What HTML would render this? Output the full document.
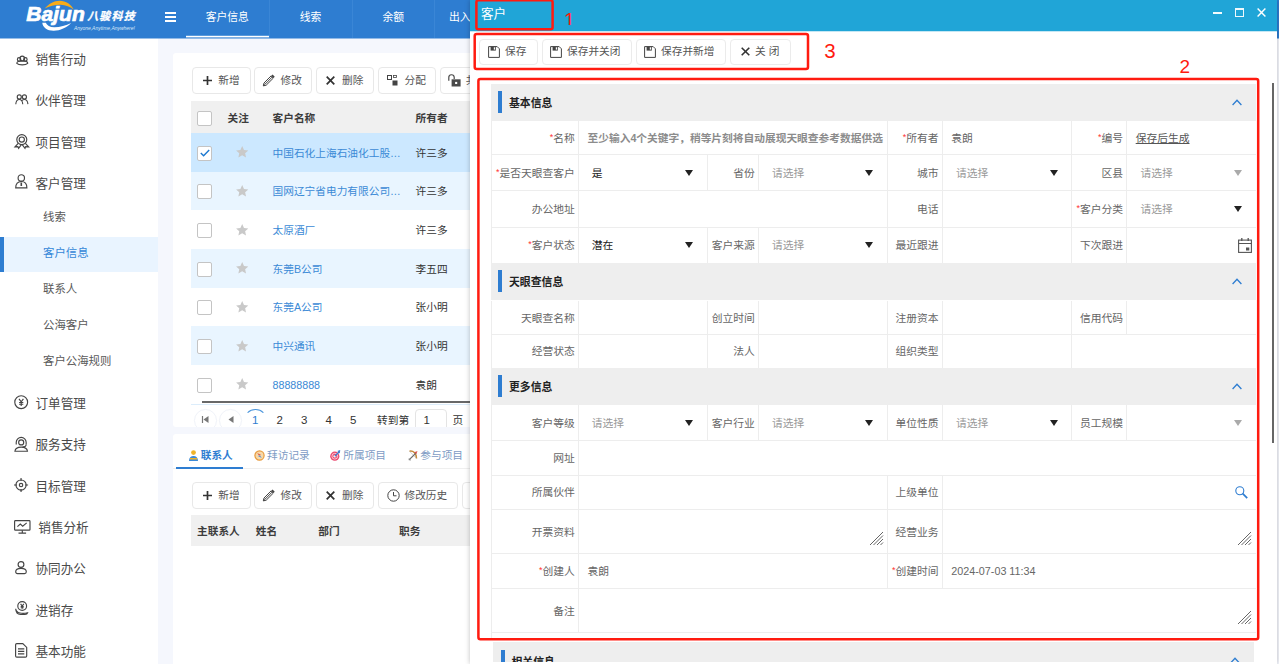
<!DOCTYPE html>
<html lang="zh-CN">
<head>
<meta charset="utf-8">
<title>客户</title>
<style>
*{box-sizing:border-box;margin:0;padding:0}
html,body{width:1279px;height:664px;overflow:hidden}
body{position:relative;background:#f5f7fd;font-family:"Liberation Sans","Noto Sans CJK SC",sans-serif;font-size:10.7px;color:#333;line-height:1}
.abs{position:absolute}
svg{display:block;overflow:visible}
/* header */
#hdr{position:absolute;left:0;top:0;width:1279px;height:38px;background:#2e7dd1}
.tab{position:absolute;top:0;height:38px;line-height:34.6px;text-align:center;color:#fff;font-size:10.8px;border-right:1px solid #3a86d6;white-space:nowrap;overflow:hidden}
/* sidebar */
#side{position:absolute;left:0;top:38px;width:158px;height:626px;background:#fff}
.m1{position:absolute;left:35.5px;font-size:12.6px;color:#4a4a4a;height:16px;line-height:16px;white-space:nowrap}
.m2{position:absolute;left:43px;font-size:11.4px;color:#595959;height:16px;line-height:16px;white-space:nowrap}
.ico{position:absolute;left:14.7px}.ico svg{stroke-width:1.15px}
/* cards */
.card{position:absolute;background:#fff;border-radius:3px}
.btn{position:absolute;height:27px;border:1px solid #e8e8e8;border-radius:4px;background:#fff;color:#555;font-size:10.7px;line-height:25px;white-space:nowrap}
.btn span{position:absolute;top:0}
.th{position:absolute;font-weight:bold;color:#3c3c3c;font-size:10.7px;white-space:nowrap;line-height:14px}
.row{position:absolute;left:191px;width:290px}
.cb{position:absolute;left:197px;width:15px;height:15px;border:1px solid #c4c4c4;border-radius:2px;background:#fff}
.nm{position:absolute;left:272.5px;color:#3b8ad6;font-size:10.7px;white-space:nowrap;line-height:14px}
.ow{position:absolute;left:415.5px;color:#333;font-size:10.7px;white-space:nowrap;line-height:14px}
.star{position:absolute;left:235.6px;width:12.4px;height:11.5px}
.pg{position:absolute;font-size:11.5px;color:#333;line-height:14px;white-space:nowrap}
.circ{position:absolute;width:22.7px;height:22.7px;border:1px solid #f0f3f9;border-radius:50%}
.t2{position:absolute;font-size:10.7px;line-height:14px;white-space:nowrap;color:#7d9bc4}
/* dialog */
#dlg{position:absolute;left:469.6px;top:0;width:807.4px;height:664px;background:#fff;box-shadow:0 0 5px rgba(0,0,0,.25)}
#dh{position:absolute;left:0;top:0;width:807.4px;height:31px;background:#20a5d7}
.sec{position:absolute;left:491px;width:764.7px;background:#eeeeee}
.sec i{position:absolute;left:7px;width:4px;background:#2e7dd1}
.sec b{position:absolute;left:18px;font-size:10.85px;color:#222;line-height:14px;white-space:nowrap}
.hl{position:absolute;left:491px;width:764.7px;height:1px;background:#ededed}
.vl{position:absolute;width:1px;background:#ededed}
.lb{position:absolute;text-align:right;color:#666;font-size:10.78px;line-height:14px;white-space:nowrap}
.lb em{color:#f33;font-style:normal;font-size:9px;position:relative;top:-2px}
.vv{position:absolute;color:#999;font-size:10.78px;line-height:14px;white-space:nowrap}
.tri{position:absolute;width:0;height:0;border-left:4px solid transparent;border-right:4px solid transparent;border-top:6px solid #222}
.tri.g{border-top-color:#aaa}
.red{position:absolute;border:2px solid #ff1a0f;border-radius:2px}
.rn{position:absolute;color:#ff1a0f;font-size:19px;line-height:20px;font-family:"Liberation Sans","Noto Sans CJK SC",sans-serif}
.dbtn{position:absolute;top:39px;height:25.5px;border:1px solid #ebebeb;border-radius:4px;background:#fff;color:#555;font-size:10.7px;white-space:nowrap}
.dbtn span{position:absolute;top:4.3px;line-height:14px}
.grip{position:absolute;width:13px;height:13px}
</style>
</head>
<body>
<div id="hdr">
<!-- logo -->
<svg class="abs" style="left:26px;top:0" width="115" height="36" viewBox="0 0 115 36">
<path d="M18.700 8.600 C22.500 3.800 28 0.700 33.500 0.700 C40 0.700 45.500 4.500 47.900 9.800 C44.500 6.800 39.500 4.900 34.500 4.800 C29 4.700 23.500 6.200 18.700 8.600Z" fill="#f7ab19"/>
<path d="M16.300 22.700 L19.800 22.700 C21 25.500 24 27.400 28.500 27.300 C34 27.200 40 25.500 45.200 23 C40.500 27.800 34 30.800 27.500 30.700 C21 30.600 16.800 27.500 16.300 22.700Z" fill="#fff"/>
<text x="0.300" y="20.700" font-family="Liberation Sans, sans-serif" font-weight="bold" font-style="italic" font-size="21" fill="#fff" stroke="#fff" stroke-width=".7" textLength="58.500" lengthAdjust="spacingAndGlyphs">Bajun</text>
<text x="61.200" y="20.200" font-family="Liberation Sans, Noto Sans CJK SC, sans-serif" font-weight="bold" font-style="italic" font-size="11" fill="#fff" stroke="#fff" stroke-width=".3" textLength="47.500" lengthAdjust="spacing">八骏科技</text>
<text x="47.900" y="29.700" font-family="Liberation Sans, sans-serif" font-style="italic" font-size="5.300" fill="#d9e8f8" textLength="61" lengthAdjust="spacingAndGlyphs">Anyone,Anytime,Anywhere!</text>
</svg>
<!-- hamburger -->
<div class="abs" style="left:165px;top:12px;width:11px;height:2px;background:#fff"></div>
<div class="abs" style="left:165px;top:16px;width:11px;height:2px;background:#fff"></div>
<div class="abs" style="left:165px;top:20px;width:11px;height:2px;background:#fff"></div>
<div class="tab" style="left:186px;width:83.5px">客户信息</div>
<div class="tab" style="left:269.5px;width:83px">线索</div>
<div class="tab" style="left:352.5px;width:82.5px">余额</div>
<div class="tab" style="left:435px;width:83px;text-align:left;padding-left:14px;border-right:0">出入库</div>
<div class="abs" style="left:186px;top:36px;width:83px;height:1px;background:#fff"></div><div class="abs" style="left:186px;top:37px;width:83px;height:1px;background:#7fb0e3"></div><div class="abs" style="left:186px;top:35px;width:83px;height:1px;background:#5a9adb"></div>
</div>

<div id="side">
<div class="abs" style="left:0;top:199px;width:158px;height:35px;background:#e9f4ff"></div>
<div class="abs" style="left:0;top:199px;width:4px;height:35px;background:#2e7dd1"></div>
<svg class="abs" style="left:15.5px;top:16.5px" width="12.5" height="10.5" viewBox="0 0 13 11" fill="none" stroke="#444" stroke-width="1.20"><circle cx="6.5" cy="3.6" r="2.4"/><circle cx="3.2" cy="4.6" r="1.8"/><circle cx="9.8" cy="4.6" r="1.8"/><path d="M.8 8.800c0-1.400 1-2.300 2.500-2.300h6.400c1.500 0 2.500.9 2.500 2.300-1 1-3 1.600-5.700 1.600S1.800 9.800.8 8.800z"/></svg><div class="m1" style="top:13.8px;left:35.5px">销售行动</div>
<svg class="abs" style="left:15px;top:56.3px" width="13.5" height="10.7" viewBox="0 0 13.5 11" fill="none" stroke="#444" stroke-width="1.15"><circle cx="4.200" cy="3" r="2.100"/><circle cx="9.500" cy="3" r="2.100"/><path d="M.6 10.500c.3-3.200 1.600-4.800 3.600-4.800s3.300 1.600 3.600 4.800M6.600 7.300c.6-1.100 1.600-1.700 2.900-1.700 2 0 3.300 1.600 3.600 4.800"/></svg><div class="m1" style="top:55.1px;left:35.5px">伙伴管理</div>
<svg class="abs" style="left:13.6px;top:96.4px" width="15.6" height="14.6" viewBox="0 0 15.600 14.600" fill="none" stroke="#444" stroke-width="1.15"><circle cx="7.800" cy="5.600" r="5"/><circle cx="7.800" cy="5.600" r="2.600"/><path d="M4.200 9.300L1 12.800l2.900-.2.700 1.700 2.600-3.500M11.400 9.300l3.200 3.500-2.900-.2-.7 1.700-2.600-3.500"/></svg><div class="m1" style="top:96.5px;left:35.5px">项目管理</div>
<svg class="abs" style="left:15.3px;top:136.2px" width="12.6" height="14.6" viewBox="0 0 12.600 14.600" fill="none" stroke="#444" stroke-width="1.15"><circle cx="6.300" cy="3.900" r="3.200"/><path d="M.7 13.900c0-4 2.100-6.400 5.600-6.400s5.600 2.400 5.600 6.400z"/><path d="M6.300 8.500v3.500" stroke-width="1.600"/></svg><div class="m1" style="top:137.8px;left:35.5px">客户管理</div>
<svg class="abs" style="left:13.9px;top:357.3px" width="14.4" height="14.4" viewBox="0 0 13 13" fill="none" stroke="#444" stroke-width="1.04"><circle cx="6.500" cy="6.500" r="5.800"/><path d="M4.500 3.500l2 2.700 2-2.700M6.500 6.200v3.700M4.600 6.800h3.800M4.600 8.400h3.800"/></svg><div class="m1" style="top:357.8px;left:35.5px">订单管理</div>
<svg class="abs" style="left:13.9px;top:398.8px" width="14.4" height="14.9" viewBox="0 0 13 13.500" fill="none" stroke="#444" stroke-width="1.04"><circle cx="6.500" cy="4.900" r="2.300"/><path d="M2 6.700V4.800a4.500 4.500 0 0 1 9 0v1.900M.8 12.900c.3-2.400 2.300-3.700 5.700-3.700s5.400 1.300 5.700 3.700z"/><path d="M11 6.700c0 1.500-1.600 2.300-3.200 2.300"/></svg><div class="m1" style="top:399.3px;left:35.5px">服务支持</div>
<svg class="abs" style="left:14.3px;top:440.2px" width="14.1" height="14.1" viewBox="0 0 13 13" fill="none" stroke="#444" stroke-width="1.06"><circle cx="6.500" cy="6.500" r="4.700"/><circle cx="6.500" cy="6.500" r="1.600"/><path d="M6.500 0v2.800M6.500 10.200V13M0 6.500h2.800M10.200 6.500H13"/></svg><div class="m1" style="top:440.8px;left:35.5px">目标管理</div>
<svg class="abs" style="left:14.2px;top:481.7px" width="16.6" height="13.8" viewBox="0 0 16.600 13.800" fill="none" stroke="#444" stroke-width="1.15"><rect x=".6" y=".6" width="15.400" height="9.600" rx=".8"/><path d="M3.400 6.600l2.900-2.500 2.400 2.100 4-3.300M8.300 10.200v2.700M4.500 13.200h7.600"/></svg><div class="m1" style="top:481.8px;left:38.3px">销售分析</div>
<svg class="abs" style="left:15.4px;top:522.6px" width="12" height="13.2" viewBox="0 0 12 13.200" fill="none" stroke="#444" stroke-width="1.15"><circle cx="6" cy="3.500" r="2.900"/><path d="M.7 10.800c0-2.100 2.100-3.400 5.300-3.400s5.300 1.300 5.300 3.400c0 1.200-.7 1.800-1.800 1.800H2.500c-1.100 0-1.800-.6-1.800-1.800z"/></svg><div class="m1" style="top:523.3px;left:35.5px">协同办公</div>
<svg class="abs" style="left:15px;top:563.4px" width="13.2" height="14" viewBox="0 0 13.200 14" fill="none" stroke="#444" stroke-width="1.15"><circle cx="7.200" cy="5" r="4.400"/><path d="M5.600 2.900l1.600 2.100 1.600-2.100M7.200 5v2.700M5.700 5.500h3M5.700 6.800h3"/><path d="M.7 7.800c.2 2.200 1.800 3.600 4.200 4.200 2.600.6 5.600.3 7.700-.2-.3 1.200-1.300 1.700-2.600 1.700H5.500C2.800 13.500.9 11.400.7 7.800z"/></svg><div class="m1" style="top:564.8px;left:35.5px">进销存</div>
<svg class="abs" style="left:15.4px;top:604.7px" width="12.3" height="14.8" viewBox="0 0 12.300 14.800" fill="none" stroke="#444" stroke-width="1.15"><path d="M1.800.600h6l3.900 3.800v8.600c0 .7-.5 1.200-1.200 1.200H1.800c-.7 0-1.200-.5-1.200-1.200V1.800c0-.7.500-1.200 1.200-1.200z"/><path d="M3 5.800h6.300M3 8.300h6.300M3 10.800h6.300" stroke-width="1.300"/></svg><div class="m1" style="top:605.8px;left:35.5px">基本功能</div>
<div class="m2" style="top:170.9px">线索</div>
<div class="m2" style="top:206.9px;color:#3587d8">客户信息</div>
<div class="m2" style="top:242.9px">联系人</div>
<div class="m2" style="top:278.9px">公海客户</div>
<div class="m2" style="top:314.9px">客户公海规则</div>
</div>
<div class="card" style="left:173px;top:53px;width:320px;height:373.5px"></div>
<div class="card" style="left:173px;top:434px;width:320px;height:240px"></div>
<div class="abs" style="left:0;top:38px;width:1279px;height:1px;background:#92bae7"></div>
<div class="abs" style="left:0;top:38px;width:158px;height:1px;background:#97bee8"></div>
<div class="btn" style="left:192.4px;top:67px;width:58.2px"><svg class="abs" style="left:9.5px;top:7.8px" width="9" height="9" viewBox="0 0 9 9"><path d="M4.5 0v9M0 4.5h9" stroke="#333" stroke-width="1.7"/></svg><span style="left:24.8px">新增</span></div>
<div class="btn" style="left:254.3px;top:67px;width:58.2px"><svg class="abs" style="left:7px;top:6px" width="13" height="13" viewBox="0 0 13 13"><path d="M1.300 11.900l.7-2.900 7.100-7.100 2.200 2.200-7.100 7.100z" fill="#fff" stroke="#444" stroke-width="1"/><path d="M2.600 10.600l7.500-7.500" stroke="#444" stroke-width="1"/><path d="M9.900 1.100l2.200 2.200" stroke="#444" stroke-width="1.900"/><path d="M1.300 11.900l.5-1.900 1.400 1.400z" fill="#444"/></svg><span style="left:25.2px">修改</span></div>
<div class="btn" style="left:316.3px;top:67px;width:58.2px"><svg class="abs" style="left:9px;top:7.8px" width="9" height="9" viewBox="0 0 9 9"><path d="M.7.7l7.600 7.600M8.300.7L.7 8.300" stroke="#333" stroke-width="1.700"/></svg><span style="left:24.8px">删除</span></div>
<div class="btn" style="left:192.4px;top:482px;width:58.2px"><svg class="abs" style="left:9.5px;top:7.8px" width="9" height="9" viewBox="0 0 9 9"><path d="M4.5 0v9M0 4.5h9" stroke="#333" stroke-width="1.7"/></svg><span style="left:24.8px">新增</span></div>
<div class="btn" style="left:254.3px;top:482px;width:58.2px"><svg class="abs" style="left:7px;top:6px" width="13" height="13" viewBox="0 0 13 13"><path d="M1.300 11.900l.7-2.900 7.100-7.100 2.200 2.200-7.100 7.100z" fill="#fff" stroke="#444" stroke-width="1"/><path d="M2.600 10.600l7.500-7.500" stroke="#444" stroke-width="1"/><path d="M9.900 1.100l2.200 2.200" stroke="#444" stroke-width="1.900"/><path d="M1.300 11.900l.5-1.900 1.400 1.400z" fill="#444"/></svg><span style="left:25.2px">修改</span></div>
<div class="btn" style="left:316.3px;top:482px;width:58.2px"><svg class="abs" style="left:9px;top:7.8px" width="9" height="9" viewBox="0 0 9 9"><path d="M.7.7l7.600 7.600M8.300.7L.7 8.300" stroke="#333" stroke-width="1.700"/></svg><span style="left:24.8px">删除</span></div>
<div class="btn" style="left:378.3px;top:67px;width:58.2px"><svg class="abs" style="left:7.5px;top:6.500px" width="11" height="11" viewBox="0 0 11 11"><rect x=".5" y=".5" width="4" height="4" fill="none" stroke="#444"/><rect x="6.5" y=".5" width="3" height="2" fill="none" stroke="#444" stroke-width=".8"/><rect x="5.500" y="5.500" width="5" height="5" fill="#444"/></svg><span style="left:25.2px">分配</span></div>
<div class="btn" style="left:440.2px;top:67px;width:70px"><svg class="abs" style="left:7px;top:6px" width="13" height="13" viewBox="0 0 13 13"><path d="M.8 6.800V3.600a2.700 2.700 0 0 1 5.400-.3V5" fill="none" stroke="#4a4a4a" stroke-width="1.200"/><rect x="3.600" y="5.300" width="9" height="7.200" fill="#4a4a4a"/><rect x="7.100" y="7.900" width="2.100" height="2.100" fill="#fff"/></svg><span style="left:24.5px">共享</span></div>
<div class="btn" style="left:378.3px;top:482px;width:80.2px"><svg class="abs" style="left:8px;top:6.200px" width="13" height="13" viewBox="0 0 13 13"><circle cx="6.500" cy="6.500" r="5.700" fill="none" stroke="#444" stroke-width="1"/><path d="M6.500 3v3.800h3" fill="none" stroke="#444" stroke-width="1"/></svg><span style="left:25.2px">修改历史</span></div>
<div class="btn" style="left:462.3px;top:482px;width:60px"><span style="left:0px"></span></div>
<div class="abs" style="left:191px;top:101px;width:300px;height:32px;background:#f0f0f0"></div>
<div class="cb" style="top:111px"></div>
<div class="th" style="left:227.5px;top:110.5px">关注</div>
<div class="th" style="left:272.5px;top:110.5px">客户名称</div>
<div class="th" style="left:415.5px;top:110.5px">所有者</div>
<div class="row" style="top:133.00px;height:38.67px;background:#cce8ff"></div>
<div class="cb" style="top:145.5px"><svg class="abs" style="left:1.5px;top:2.5px" width="10" height="8" viewBox="0 0 10 8"><path d="M.8 4l2.800 2.800L9.200.9" fill="none" stroke="#1b78d0" stroke-width="1.400"/></svg></div>
<svg class="star" style="top:146.1px" viewBox="0 0 13 12"><path d="M6.500 0l1.900 4.100 4.500.5-3.300 3 .9 4.400-4-2.300-4 2.300.9-4.400L.1 4.600l4.500-.5z" fill="#c9c9c9"/></svg>
<div class="nm" style="top:145.5px">中国石化上海石油化工股…</div>
<div class="ow" style="top:145.5px">许三多</div>
<div class="row" style="top:171.67px;height:38.67px;background:#e9f5ff"></div>
<div class="cb" style="top:184.2px"></div>
<svg class="star" style="top:184.8px" viewBox="0 0 13 12"><path d="M6.500 0l1.900 4.100 4.500.5-3.300 3 .9 4.400-4-2.300-4 2.300.9-4.400L.1 4.600l4.500-.5z" fill="#c9c9c9"/></svg>
<div class="nm" style="top:184.2px">国网辽宁省电力有限公司…</div>
<div class="ow" style="top:184.2px">许三多</div>
<div class="row" style="top:210.34px;height:38.67px;background:#fff"></div>
<div class="cb" style="top:222.9px"></div>
<svg class="star" style="top:223.5px" viewBox="0 0 13 12"><path d="M6.500 0l1.900 4.100 4.500.5-3.300 3 .9 4.400-4-2.300-4 2.300.9-4.400L.1 4.600l4.500-.5z" fill="#c9c9c9"/></svg>
<div class="nm" style="top:222.9px">太原酒厂</div>
<div class="ow" style="top:222.9px">许三多</div>
<div class="row" style="top:249.01px;height:38.67px;background:#e9f5ff"></div>
<div class="cb" style="top:261.5px"></div>
<svg class="star" style="top:262.1px" viewBox="0 0 13 12"><path d="M6.500 0l1.900 4.100 4.500.5-3.300 3 .9 4.400-4-2.300-4 2.300.9-4.400L.1 4.600l4.500-.5z" fill="#c9c9c9"/></svg>
<div class="nm" style="top:261.5px">东莞B公司</div>
<div class="ow" style="top:261.5px">李五四</div>
<div class="row" style="top:287.68px;height:38.67px;background:#fff"></div>
<div class="cb" style="top:300.2px"></div>
<svg class="star" style="top:300.8px" viewBox="0 0 13 12"><path d="M6.500 0l1.900 4.100 4.500.5-3.300 3 .9 4.400-4-2.300-4 2.300.9-4.400L.1 4.600l4.500-.5z" fill="#c9c9c9"/></svg>
<div class="nm" style="top:300.2px">东莞A公司</div>
<div class="ow" style="top:300.2px">张小明</div>
<div class="row" style="top:326.35px;height:38.67px;background:#e9f5ff"></div>
<div class="cb" style="top:338.9px"></div>
<svg class="star" style="top:339.5px" viewBox="0 0 13 12"><path d="M6.500 0l1.900 4.100 4.500.5-3.300 3 .9 4.400-4-2.300-4 2.300.9-4.400L.1 4.600l4.500-.5z" fill="#c9c9c9"/></svg>
<div class="nm" style="top:338.9px">中兴通讯</div>
<div class="ow" style="top:338.9px">张小明</div>
<div class="row" style="top:365.02px;height:38.67px;background:#fff"></div>
<div class="cb" style="top:377.6px"></div>
<svg class="star" style="top:378.2px" viewBox="0 0 13 12"><path d="M6.500 0l1.900 4.100 4.500.5-3.300 3 .9 4.400-4-2.300-4 2.300.9-4.400L.1 4.600l4.500-.5z" fill="#c9c9c9"/></svg>
<div class="nm" style="top:377.6px">88888888</div>
<div class="ow" style="top:377.6px">袁朗</div>
<div class="abs" style="left:202px;top:400.7px;width:280px;height:2px;background:#686868"></div>
<div class="abs" style="left:191px;top:404px;width:290px;height:1px;background:#dcedfb"></div>
<div class="abs" style="left:173px;top:405px;width:300px;height:21.5px;overflow:hidden">
<div class="circ" style="left:21.3px;top:4px"></div><div class="circ" style="left:46.3px;top:4px"></div>
<div class="circ" style="left:71.3px;top:4px;border-width:1.3px;border-color:transparent;border-top-color:#4a95dc"></div>
<svg class="abs" style="left:29.3px;top:10.9px" width="7" height="7" viewBox="0 0 7 7"><path d="M.5 0v7" stroke="#777" stroke-width="1.200"/><path d="M6.500 0v7L1.500 3.500z" fill="#777"/></svg>
<svg class="abs" style="left:55px;top:10.9px" width="6" height="7" viewBox="0 0 6 7"><path d="M5.500 0v7L.5 3.500z" fill="#777"/></svg>
<div class="pg" style="left:79.0px;top:7.8px;color:#2e7dd1">1</div>
<div class="pg" style="left:103.5px;top:7.8px;color:#333">2</div>
<div class="pg" style="left:128.0px;top:7.8px;color:#333">3</div>
<div class="pg" style="left:152.5px;top:7.8px;color:#333">4</div>
<div class="pg" style="left:177.0px;top:7.8px;color:#333">5</div>
<div class="pg" style="left:204px;top:8.2px;font-size:10.7px">转到第</div>
<div class="abs" style="left:241.5px;top:4px;width:32.5px;height:24px;border:1px solid #e4e4e4;border-radius:4px"></div>
<div class="pg" style="left:250.5px;top:7.8px">1</div>
<div class="pg" style="left:279.5px;top:8.2px;font-size:10.7px">页</div>
</div>
<div class="abs" style="left:173px;top:468px;width:310px;height:1px;background:#efefef"></div>
<div class="abs" style="left:176px;top:467px;width:67px;height:2px;background:#2e7dd1"></div>
<svg class="abs" style="left:189px;top:449.5px" width="9" height="11" viewBox="0 0 9 11"><circle cx="4.500" cy="2.600" r="2.400" fill="#f0b429"/><path d="M0 11c0-3.500 1.800-5 4.500-5S9 7.500 9 11z" fill="#3c8ad8"/><rect x="1" y="8" width="7" height="1.500" fill="#f0b429"/></svg>
<div class="t2" style="left:200.7px;top:448px;color:#2e7dd1;font-weight:bold">联系人</div>
<svg class="abs" style="left:253.5px;top:450px" width="11" height="11" viewBox="0 0 11 11"><circle cx="5.500" cy="5.500" r="4.600" fill="#f7d9a8" stroke="#e89a3c" stroke-width="1.200"/><path d="M3.200 3l4 2-2.200.6z" fill="#d94b3f"/><path d="M7.800 8l-4-2 2.200-.6z" fill="#5a8fd0"/></svg>
<div class="t2" style="left:267px;top:448px">拜访记录</div>
<svg class="abs" style="left:330px;top:449.500px" width="11" height="11" viewBox="0 0 11 11"><circle cx="4.800" cy="6.200" r="4.600" fill="#ea4a70"/><circle cx="4.800" cy="6.200" r="2.900" fill="none" stroke="#fbd3dc" stroke-width=".9"/><circle cx="4.800" cy="6.200" r="1.300" fill="#fff"/><path d="M4.800 6.200l4.200-4.200" stroke="#3f7fd0" stroke-width="1.300"/><path d="M7.300 1.100l2.900-1 -.3 3.300z" fill="#3f7fd0"/></svg>
<div class="t2" style="left:343.3px;top:448px">所属项目</div>
<svg class="abs" style="left:407.500px;top:450px" width="10" height="11" viewBox="0 0 10 11"><path d="M1.500 1.200c3.500-.8 7 1.800 7 7.300" fill="none" stroke="#c58b3c" stroke-width="1.500"/><path d="M1.500 1.200l7 7.300" stroke="#b9b9b9" stroke-width=".6"/><path d="M.8 10.200L8 3" stroke="#6b6b6b" stroke-width="1.100"/><path d="M6.300 2.300l3.200-1.300-1.200 3.200z" fill="#d9534f"/><path d="M.3 8.600l2.100.2.200 2.100z" fill="#8a8a8a"/></svg>
<div class="t2" style="left:420.3px;top:448px">参与项目</div>
<div class="abs" style="left:191px;top:514.5px;width:300px;height:31px;background:#f0f0f0"></div>
<div class="th" style="left:197px;top:523.8px">主联系人</div>
<div class="th" style="left:255.8px;top:523.8px">姓名</div>
<div class="th" style="left:318.3px;top:523.8px">部门</div>
<div class="th" style="left:399px;top:523.8px">职务</div>
<div id="dlg"><div id="dh"></div><div class="abs" style="left:0;top:31px;width:807.4px;height:1px;background:#c4e7f4"></div></div>
<div class="abs" style="left:481px;top:6.5px;color:#fff;font-size:12.6px;line-height:14px">客户</div>
<div class="abs" style="left:1213px;top:12px;width:9px;height:2px;background:#f4fbfd"></div>
<div class="abs" style="left:1234.5px;top:8px;width:9px;height:9px;border:1px solid #eef8fc;border-top-width:2px"></div>
<svg class="abs" style="left:1256.5px;top:8px" width="9" height="9" viewBox="0 0 9 9"><path d="M.6.600l7.800 7.800M8.400.600L.6 8.400" stroke="#fff" stroke-width="1.450"/></svg>
<div class="dbtn" style="left:479px;width:58.5px"><svg class="abs" style="left:7.8px;top:5.6px" width="12" height="12" viewBox="0 0 12 12"><path d="M.6.600h8.600l2.200 2.200v8.600H.6z" fill="none" stroke="#444" stroke-width="1"/><rect x="2.600" y=".6" width="5.200" height="4" fill="#444"/><rect x="5.800" y="1.300" width="1.200" height="2.300" fill="#fff"/></svg><span style="left:25px">保存</span></div>
<div class="dbtn" style="left:541.5px;width:90.5px"><svg class="abs" style="left:7.8px;top:5.6px" width="12" height="12" viewBox="0 0 12 12"><path d="M.6.600h8.600l2.200 2.200v8.600H.6z" fill="none" stroke="#444" stroke-width="1"/><rect x="2.600" y=".6" width="5.200" height="4" fill="#444"/><rect x="5.800" y="1.300" width="1.200" height="2.300" fill="#fff"/></svg><span style="left:24.5px">保存并关闭</span></div>
<div class="dbtn" style="left:635.5px;width:90px"><svg class="abs" style="left:7.8px;top:5.6px" width="12" height="12" viewBox="0 0 12 12"><path d="M.6.600h8.600l2.200 2.200v8.600H.6z" fill="none" stroke="#444" stroke-width="1"/><rect x="2.600" y=".6" width="5.200" height="4" fill="#444"/><rect x="5.800" y="1.300" width="1.200" height="2.300" fill="#fff"/></svg><span style="left:24.5px">保存并新增</span></div>
<div class="dbtn" style="left:729.5px;width:61px"><svg class="abs" style="left:10.5px;top:7.3px" width="9" height="9" viewBox="0 0 9 9"><path d="M.7.700l7.600 7.600M8.300.700L.7 8.300" stroke="#333" stroke-width="1.600"/></svg><span style="left:24.5px">关 闭</span></div>
<div class="sec" style="top:84px;height:36.5px"><i style="top:7px;height:21.5px"></i><b style="top:11.8px">基本信息</b><svg class="abs" style="right:14px;top:14.9px" width="10" height="6.500" viewBox="0 0 10 6.500"><path d="M.6 6L5 1.200 9.400 6" fill="none" stroke="#2e7dd1" stroke-width="1.300"/></svg></div>
<div class="hl" style="top:154.0px"></div>
<div class="hl" style="top:190.2px"></div>
<div class="hl" style="top:226.5px"></div>
<div class="lb" style="left:491px;width:83.8px;top:130.8px"><em>*</em>名称</div>
<div class="vv" style="left:587.5px;top:130.8px;font-weight:bold;color:#8c8c8c;font-size:10.72px">至少输入4个关键字，稍等片刻将自动展现天眼查参考数据供选</div>
<div class="lb" style="left:887.5px;width:51.0px;top:130.8px"><em>*</em>所有者</div>
<div class="vv" style="left:951.3px;top:130.8px;color:#666">袁朗</div>
<div class="lb" style="left:1071.5px;width:51.5px;top:130.8px"><em>*</em>编号</div>
<div class="vv" style="left:1135.7px;top:130.8px;color:#555;text-decoration:underline">保存后生成</div>
<div class="vl" style="left:490.5px;top:120.5px;height:34.0px"></div>
<div class="vl" style="left:577.8px;top:120.5px;height:34.0px"></div>
<div class="vl" style="left:887.0px;top:120.5px;height:34.0px"></div>
<div class="vl" style="left:941.5px;top:120.5px;height:34.0px"></div>
<div class="vl" style="left:1071.0px;top:120.5px;height:34.0px"></div>
<div class="vl" style="left:1126.0px;top:120.5px;height:34.0px"></div>
<div class="lb" style="left:491px;width:83.8px;top:165.9px"><em>*</em>是否天眼查客户</div>
<div class="vv" style="left:591.7px;top:165.9px;color:#222">是</div>
<div class="tri" style="left:685.4000000000001px;top:169.9px"></div>
<div class="lb" style="left:707.3px;width:47.5px;top:165.9px">省份</div>
<div class="vv" style="left:772px;top:165.9px;">请选择</div>
<div class="tri" style="left:865.2px;top:169.9px"></div>
<div class="lb" style="left:887.5px;width:51.0px;top:165.9px">城市</div>
<div class="vv" style="left:956px;top:165.9px;">请选择</div>
<div class="tri" style="left:1049.7px;top:169.9px"></div>
<div class="lb" style="left:1071.5px;width:51.5px;top:165.9px">区县</div>
<div class="vv" style="left:1140.5px;top:165.9px;">请选择</div>
<div class="tri g" style="left:1234.0px;top:169.9px"></div>
<div class="vl" style="left:490.5px;top:154.5px;height:36.2px"></div>
<div class="vl" style="left:577.8px;top:154.5px;height:36.2px"></div>
<div class="vl" style="left:706.8px;top:154.5px;height:36.2px"></div>
<div class="vl" style="left:757.8px;top:154.5px;height:36.2px"></div>
<div class="vl" style="left:887.0px;top:154.5px;height:36.2px"></div>
<div class="vl" style="left:941.5px;top:154.5px;height:36.2px"></div>
<div class="vl" style="left:1071.0px;top:154.5px;height:36.2px"></div>
<div class="vl" style="left:1126.0px;top:154.5px;height:36.2px"></div>
<div class="lb" style="left:491px;width:83.8px;top:202.2px">办公地址</div>
<div class="lb" style="left:887.5px;width:51.0px;top:202.2px">电话</div>
<div class="lb" style="left:1071.5px;width:51.5px;top:202.2px"><em>*</em>客户分类</div>
<div class="vv" style="left:1140.5px;top:202.2px;">请选择</div>
<div class="tri" style="left:1234.0px;top:206.2px"></div>
<div class="vl" style="left:490.5px;top:190.7px;height:36.3px"></div>
<div class="vl" style="left:577.8px;top:190.7px;height:36.3px"></div>
<div class="vl" style="left:887.0px;top:190.7px;height:36.3px"></div>
<div class="vl" style="left:941.5px;top:190.7px;height:36.3px"></div>
<div class="vl" style="left:1071.0px;top:190.7px;height:36.3px"></div>
<div class="vl" style="left:1126.0px;top:190.7px;height:36.3px"></div>
<div class="lb" style="left:491px;width:83.8px;top:238.4px"><em>*</em>客户状态</div>
<div class="vv" style="left:591.7px;top:238.4px;color:#222">潜在</div>
<div class="tri" style="left:685.4000000000001px;top:242.4px"></div>
<div class="lb" style="left:707.3px;width:47.5px;top:238.4px">客户来源</div>
<div class="vv" style="left:772px;top:238.4px;">请选择</div>
<div class="tri" style="left:865.2px;top:242.4px"></div>
<div class="lb" style="left:887.5px;width:51.0px;top:238.4px">最近跟进</div>
<div class="lb" style="left:1071.5px;width:51.5px;top:238.4px">下次跟进</div>
<div class="vl" style="left:490.5px;top:227px;height:36.2px"></div>
<div class="vl" style="left:577.8px;top:227px;height:36.2px"></div>
<div class="vl" style="left:706.8px;top:227px;height:36.2px"></div>
<div class="vl" style="left:757.8px;top:227px;height:36.2px"></div>
<div class="vl" style="left:887.0px;top:227px;height:36.2px"></div>
<div class="vl" style="left:941.5px;top:227px;height:36.2px"></div>
<div class="vl" style="left:1071.0px;top:227px;height:36.2px"></div>
<div class="vl" style="left:1126.0px;top:227px;height:36.2px"></div>
<svg class="abs" style="left:1238px;top:238.3px" width="14" height="15" viewBox="0 0 14 15"><rect x=".6" y="2.100" width="12.800" height="12.300" fill="none" stroke="#555" stroke-width="1.100"/><path d="M.6 5.500h12.800" stroke="#555" stroke-width="1"/><path d="M3.800 0v3M10.200 0v3" stroke="#555" stroke-width="1.300"/><rect x="8" y="9.500" width="3.300" height="3" fill="#555"/></svg>
<div class="sec" style="top:263.2px;height:37.3px"><i style="top:7px;height:21.5px"></i><b style="top:12.2px">天眼查信息</b><svg class="abs" style="right:14px;top:15.3px" width="10" height="6.500" viewBox="0 0 10 6.500"><path d="M.6 6L5 1.200 9.400 6" fill="none" stroke="#2e7dd1" stroke-width="1.300"/></svg></div>
<div class="hl" style="top:333.8px"></div>
<div class="lb" style="left:491px;width:83.8px;top:310.7px">天眼查名称</div>
<div class="lb" style="left:707.3px;width:47.5px;top:310.7px">创立时间</div>
<div class="lb" style="left:887.5px;width:51.0px;top:310.7px">注册资本</div>
<div class="lb" style="left:1071.5px;width:51.5px;top:310.7px">信用代码</div>
<div class="lb" style="left:491px;width:83.8px;top:344.4px">经营状态</div>
<div class="lb" style="left:707.3px;width:47.5px;top:344.4px">法人</div>
<div class="lb" style="left:887.5px;width:51.0px;top:344.4px">组织类型</div>
<div class="vl" style="left:490.5px;top:300.5px;height:33.8px"></div>
<div class="vl" style="left:577.8px;top:300.5px;height:33.8px"></div>
<div class="vl" style="left:706.8px;top:300.5px;height:33.8px"></div>
<div class="vl" style="left:757.8px;top:300.5px;height:33.8px"></div>
<div class="vl" style="left:887.0px;top:300.5px;height:33.8px"></div>
<div class="vl" style="left:941.5px;top:300.5px;height:33.8px"></div>
<div class="vl" style="left:1071.0px;top:300.5px;height:33.8px"></div>
<div class="vl" style="left:1126.0px;top:300.5px;height:33.8px"></div>
<div class="vl" style="left:490.5px;top:334.3px;height:33.7px"></div>
<div class="vl" style="left:577.8px;top:334.3px;height:33.7px"></div>
<div class="vl" style="left:706.8px;top:334.3px;height:33.7px"></div>
<div class="vl" style="left:757.8px;top:334.3px;height:33.7px"></div>
<div class="vl" style="left:887.0px;top:334.3px;height:33.7px"></div>
<div class="vl" style="left:941.5px;top:334.3px;height:33.7px"></div>
<div class="vl" style="left:1071.0px;top:334.3px;height:33.7px"></div>
<div class="sec" style="top:368px;height:36.7px"><i style="top:7px;height:21.5px"></i><b style="top:12.0px">更多信息</b><svg class="abs" style="right:14px;top:15.1px" width="10" height="6.500" viewBox="0 0 10 6.500"><path d="M.6 6L5 1.200 9.400 6" fill="none" stroke="#2e7dd1" stroke-width="1.300"/></svg></div>
<div class="hl" style="top:440.0px"></div>
<div class="hl" style="top:474.5px"></div>
<div class="hl" style="top:508.8px"></div>
<div class="hl" style="top:553.2px"></div>
<div class="hl" style="top:587.5px"></div>
<div class="hl" style="top:631.9px"></div>
<div class="lb" style="left:491px;width:83.8px;top:415.9px">客户等级</div>
<div class="vv" style="left:591.7px;top:415.9px;">请选择</div>
<div class="tri" style="left:685.4000000000001px;top:419.9px"></div>
<div class="lb" style="left:707.3px;width:47.5px;top:415.9px">客户行业</div>
<div class="vv" style="left:772px;top:415.9px;">请选择</div>
<div class="tri" style="left:865.2px;top:419.9px"></div>
<div class="lb" style="left:887.5px;width:51.0px;top:415.9px">单位性质</div>
<div class="vv" style="left:956px;top:415.9px;">请选择</div>
<div class="tri" style="left:1049.7px;top:419.9px"></div>
<div class="lb" style="left:1071.5px;width:51.5px;top:415.9px">员工规模</div>
<div class="tri g" style="left:1234.0px;top:419.9px"></div>
<div class="vl" style="left:490.5px;top:404.7px;height:35.8px"></div>
<div class="vl" style="left:577.8px;top:404.7px;height:35.8px"></div>
<div class="vl" style="left:706.8px;top:404.7px;height:35.8px"></div>
<div class="vl" style="left:757.8px;top:404.7px;height:35.8px"></div>
<div class="vl" style="left:887.0px;top:404.7px;height:35.8px"></div>
<div class="vl" style="left:941.5px;top:404.7px;height:35.8px"></div>
<div class="vl" style="left:1071.0px;top:404.7px;height:35.8px"></div>
<div class="vl" style="left:1126.0px;top:404.7px;height:35.8px"></div>
<div class="lb" style="left:491px;width:83.8px;top:451.1px">网址</div>
<div class="vl" style="left:490.5px;top:440.5px;height:34.5px"></div>
<div class="vl" style="left:577.8px;top:440.5px;height:34.5px"></div>
<div class="lb" style="left:491px;width:83.8px;top:485.4px">所属伙伴</div>
<div class="lb" style="left:887.5px;width:51.0px;top:485.4px">上级单位</div>
<div class="vl" style="left:490.5px;top:475px;height:34.3px"></div>
<div class="vl" style="left:577.8px;top:475px;height:34.3px"></div>
<div class="vl" style="left:887.0px;top:475px;height:34.3px"></div>
<div class="vl" style="left:941.5px;top:475px;height:34.3px"></div>
<svg class="abs" style="left:1235px;top:485.5px" width="13" height="13" viewBox="0 0 13 13"><circle cx="4.800" cy="4.800" r="4" fill="none" stroke="#2e7dd1" stroke-width="1.100"/><path d="M7.700 7.700l4.500 4.500" stroke="#2e7dd1" stroke-width="1.700"/></svg>
<div class="lb" style="left:491px;width:83.8px;top:524.8px">开票资料</div>
<div class="lb" style="left:887.5px;width:51.0px;top:524.8px">经营业务</div>
<div class="vl" style="left:490.5px;top:509.3px;height:44.4px"></div>
<div class="vl" style="left:577.8px;top:509.3px;height:44.4px"></div>
<div class="vl" style="left:887.0px;top:509.3px;height:44.4px"></div>
<div class="vl" style="left:941.5px;top:509.3px;height:44.4px"></div>
<div class="lb" style="left:491px;width:83.8px;top:564.1px"><em>*</em>创建人</div>
<div class="vv" style="left:587.5px;top:564.1px;color:#666">袁朗</div>
<div class="lb" style="left:887.5px;width:51.0px;top:564.1px"><em>*</em>创建时间</div>
<div class="vv" style="left:951.3px;top:564.1px;color:#666">2024-07-03 11:34</div>
<div class="vl" style="left:490.5px;top:553.7px;height:34.3px"></div>
<div class="vl" style="left:577.8px;top:553.7px;height:34.3px"></div>
<div class="vl" style="left:887.0px;top:553.7px;height:34.3px"></div>
<div class="vl" style="left:941.5px;top:553.7px;height:34.3px"></div>
<div class="lb" style="left:491px;width:83.8px;top:603.5px">备注</div>
<div class="vl" style="left:490.5px;top:588px;height:44.4px"></div>
<div class="vl" style="left:577.8px;top:588px;height:44.4px"></div>
<div class="vl" style="left:490.5px;top:632.4px;height:5.6px"></div>
<svg class="grip" style="left:870px;top:531.7px" viewBox="0 0 13 13"><path d="M0 13L13 0M3.500 13L13 3.500M7 13l6-6M10.500 13l2.500-2.500" stroke="#555" stroke-width=".9" fill="none"/></svg>
<svg class="grip" style="left:1238px;top:531.7px" viewBox="0 0 13 13"><path d="M0 13L13 0M3.500 13L13 3.500M7 13l6-6M10.500 13l2.500-2.500" stroke="#555" stroke-width=".9" fill="none"/></svg>
<svg class="grip" style="left:1238px;top:610.5px" viewBox="0 0 13 13"><path d="M0 13L13 0M3.500 13L13 3.500M7 13l6-6M10.500 13l2.500-2.500" stroke="#555" stroke-width=".9" fill="none"/></svg>
<div class="abs" style="left:470.5px;top:641.5px;width:806px;height:20.5px;overflow:hidden">
<div class="sec" style="top:0;height:36.5px;left:22.5px;width:760.8px"><i style="top:8.5px;height:21.5px;left:8px"></i><b style="top:13.3px;left:18.5px">相关信息</b><svg class="abs" style="right:14px;top:15.5px" width="10" height="6.500" viewBox="0 0 10 6.500"><path d="M.6 6L5 1.200 9.400 6" fill="none" stroke="#2e7dd1" stroke-width="1.300"/></svg></div>
</div>
<div class="abs" style="left:1271.7px;top:83px;width:2px;height:360px;background:#666"></div>
<svg class="abs" style="left:0;top:0;pointer-events:none" width="1279" height="664" viewBox="0 0 1279 664"><g fill="none" stroke="#ff1b10" stroke-width="2.5"><rect x="476.4" y="0.3" width="76.2" height="29" rx="2"/><rect x="474.7" y="34.1" width="333.3" height="34.9" rx="2"/><rect x="478.4" y="79" width="779.8" height="560.3" rx="2"/></g></svg>
<div class="abs" style="left:564px;top:9.5px;width:12px;height:15.3px;overflow:hidden"><div class="rn" style="left:0;top:0;font-size:19.5px">1</div></div>
<div class="rn" style="left:824.2px;top:40.6px;font-size:20.5px">3</div>
<div class="rn" style="left:1179.5px;top:56.5px">2</div>
</body>
</html>
